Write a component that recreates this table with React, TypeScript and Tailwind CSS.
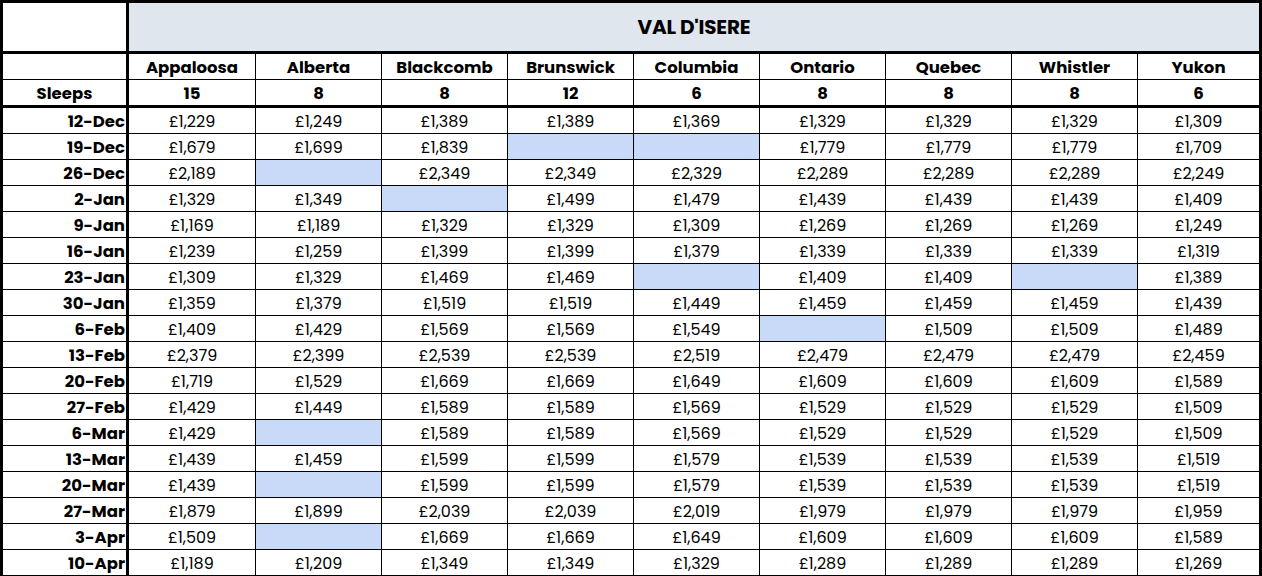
import React from 'react';

type Chalet = { name: string; sleeps: number };

const chalets: Chalet[] = [
  { name: 'Appaloosa', sleeps: 15 },
  { name: 'Alberta', sleeps: 8 },
  { name: 'Blackcomb', sleeps: 8 },
  { name: 'Brunswick', sleeps: 12 },
  { name: 'Columbia', sleeps: 6 },
  { name: 'Ontario', sleeps: 8 },
  { name: 'Quebec', sleeps: 8 },
  { name: 'Whistler', sleeps: 8 },
  { name: 'Yukon', sleeps: 6 },
];

// null = not available (blue cell)
const rows: [string, (number | null)[]][] = [
  ['12-Dec', [1229, 1249, 1389, 1389, 1369, 1329, 1329, 1329, 1309]],
  ['19-Dec', [1679, 1699, 1839, null, null, 1779, 1779, 1779, 1709]],
  ['26-Dec', [2189, null, 2349, 2349, 2329, 2289, 2289, 2289, 2249]],
  ['2-Jan', [1329, 1349, null, 1499, 1479, 1439, 1439, 1439, 1409]],
  ['9-Jan', [1169, 1189, 1329, 1329, 1309, 1269, 1269, 1269, 1249]],
  ['16-Jan', [1239, 1259, 1399, 1399, 1379, 1339, 1339, 1339, 1319]],
  ['23-Jan', [1309, 1329, 1469, 1469, null, 1409, 1409, null, 1389]],
  ['30-Jan', [1359, 1379, 1519, 1519, 1449, 1459, 1459, 1459, 1439]],
  ['6-Feb', [1409, 1429, 1569, 1569, 1549, null, 1509, 1509, 1489]],
  ['13-Feb', [2379, 2399, 2539, 2539, 2519, 2479, 2479, 2479, 2459]],
  ['20-Feb', [1719, 1529, 1669, 1669, 1649, 1609, 1609, 1609, 1589]],
  ['27-Feb', [1429, 1449, 1589, 1589, 1569, 1529, 1529, 1529, 1509]],
  ['6-Mar', [1429, null, 1589, 1589, 1569, 1529, 1529, 1529, 1509]],
  ['13-Mar', [1439, 1459, 1599, 1599, 1579, 1539, 1539, 1539, 1519]],
  ['20-Mar', [1439, null, 1599, 1599, 1579, 1539, 1539, 1539, 1519]],
  ['27-Mar', [1879, 1899, 2039, 2039, 2019, 1979, 1979, 1979, 1959]],
  ['3-Apr', [1509, null, 1669, 1669, 1649, 1609, 1609, 1609, 1589]],
  ['10-Apr', [1189, 1209, 1349, 1349, 1329, 1289, 1289, 1289, 1269]],
];

const price = (n: number) => '£' + n.toLocaleString('en-GB');

// border on the right of each chalet column, last one has none (outer border covers it)
const colBorder = (i: number) => (i === chalets.length - 1 ? '' : 'border-r border-black');

export default function App() {
  return (
    <div className="w-[1262px] h-[576px] overflow-hidden bg-white text-black font-['Poppins','Inter',sans-serif]">
      <div className="border-[3px] border-b-0 border-black grid grid-cols-[126px_127px_126px_126px_126px_126px_126px_126px_126px_121px]">
        {/* title row */}
        <div className="h-[51px] border-r-[3px] border-b-[3px] border-black" />
        <div className="col-span-9 h-[51px] border-b-[3px] border-black bg-[#dfe6ee] flex items-center justify-center text-[20px] font-bold tracking-[-0.2px]">
          VAL D'ISERE
        </div>

        {/* chalet names */}
        <div className="h-[26px] border-r-[3px] border-b border-black" />
        {chalets.map((c, i) => (
          <div
            key={c.name}
            className={`h-[26px] border-b border-black ${colBorder(i)} flex items-center justify-center pt-[3px] text-[16.5px] font-bold leading-none`}
          >
            {c.name}
          </div>
        ))}

        {/* sleeps */}
        <div className="h-[28px] border-r-[3px] border-b-[3px] border-black flex items-center justify-center pt-[3px] text-[16.5px] font-bold leading-none">
          Sleeps
        </div>
        {chalets.map((c, i) => (
          <div
            key={c.name + '-s'}
            className={`h-[28px] border-b-[3px] border-black ${colBorder(i)} flex items-center justify-center pt-[3px] text-[16.5px] font-bold leading-none`}
          >
            {c.sleeps}
          </div>
        ))}

        {/* weekly prices */}
        {rows.map(([date, prices]) => (
          <React.Fragment key={date}>
            <div className="h-[26px] border-r-[3px] border-b border-black flex items-center justify-end pr-[1px] pt-[3px] text-[16.5px] font-bold leading-none">
              {date}
            </div>
            {prices.map((p, i) => (
              <div
                key={date + i}
                className={`h-[26px] border-b border-black ${colBorder(i)} flex items-center justify-center pt-[3px] text-[16px] leading-none ${
                  p === null ? 'bg-[#c9daf8]' : ''
                }`}
              >
                {p === null ? '' : price(p)}
              </div>
            ))}
          </React.Fragment>
        ))}
      </div>
    </div>
  );
}
